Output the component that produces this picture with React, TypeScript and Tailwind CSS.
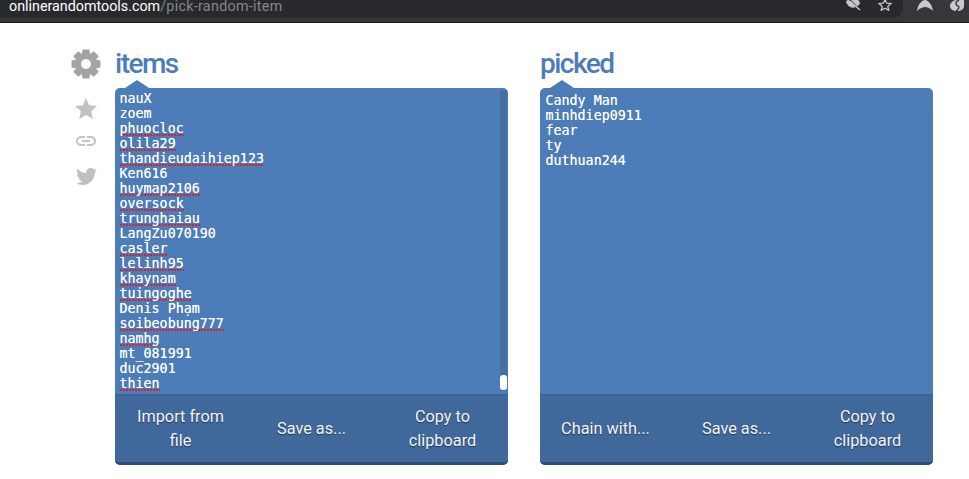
import { FaTwitter } from "react-icons/fa";
import { MdLink } from "react-icons/md";

const items: [string, boolean][] = [
  ["nauX", false], ["zoem", false], ["phuocloc", true], ["olila29", true], ["thandieudaihiep123", true],
  ["Ken616", false], ["huymap2106", true], ["oversock", true], ["trunghaiau", true], ["LangZu070190", false],
  ["casler", true], ["lelinh95", true], ["khaynam", true], ["tuingoghe", true], ["Denis Phạm", false],
  ["soibeobung777", true], ["namhg", true], ["mt_081991", false], ["duc2901", false], ["thien", true],
];
const picked = ["Candy Man", "minhdiep0911", "fear", "ty", "duthuan244"];

function Btn({ children }: { children: React.ReactNode }) {
  return (
    <div className="flex-1 text-center text-[#f2f5f9] text-[16.3px] leading-[24px] [text-shadow:0_1px_1px_rgba(0,0,0,0.5)]">
      {children}
    </div>
  );
}

function Panel({ title, children, buttons, pad }: { title: string; children: React.ReactNode; buttons: React.ReactNode; pad: string }) {
  return (
    <div className="w-[393px] flex flex-col">
      <div className="h-[65px] pt-[21px] text-[28px] leading-[40px] font-medium tracking-[-1.5px] text-[#4d7db8]">{title}</div>
      <div className="relative h-[377px] flex flex-col rounded-[5px] bg-[#4d7db8] overflow-visible">
        <div className="absolute left-[10px] -top-[8px] w-0 h-0 border-l-[12px] border-r-[12px] border-b-[8px] border-l-transparent border-r-transparent border-b-[#4d7db8]" />
        <div className={`relative h-[306px] ${pad} font-['DejaVu_Sans_Mono','Liberation_Mono',monospace] text-[13.33px] leading-[15px] text-white [text-shadow:0_0_0.6px_rgba(255,255,255,0.8)]`}>
          {children}
        </div>
        <div className="h-[71px] flex items-center bg-[#41689b] border-t border-t-[#3b5f8e] border-b-[3px] border-b-[#2f4b72] rounded-b-[5px]">
          {buttons}
        </div>
      </div>
    </div>
  );
}

function Gear() {
  return (
    <svg className="w-[30px] h-[30px]" viewBox="0 0 30 30" fill="#a3a3a3">
      {[0, 45, 90, 135, 180, 225, 270, 315].map((a) => (
        <path key={a} d="M11.6 0.5 H18.4 L19.4 7 H10.6 Z" transform={`rotate(${a} 15 15)`} />
      ))}
      <path fillRule="evenodd" d="M15 4.5 a10.5 10.5 0 1 0 0.01 0 Z M15 10 a5 5 0 1 1 -0.01 0 Z" />
    </svg>
  );
}

export default function App() {
  return (
    <div className="w-[969px] h-[479px] bg-white overflow-hidden font-['Roboto',sans-serif]">
      <div className="h-[23px] bg-[#36373b] border-b border-b-[#17181a] flex">
        <div className="w-[903px] h-[18px] bg-[#28292d] rounded-br-[10px] pl-[9px] relative">
          <div className="text-[14.3px] leading-[12px] text-white whitespace-nowrap">
            onlinerandomtools.com<span className="text-[#85868a] tracking-[0.3px]">/pick-random-item</span>
          </div>
          <svg className="absolute left-[846px] top-0" width="16" height="12" viewBox="0 0 16 12" fill="none" stroke="#c4c5c8" strokeWidth="2">
            <path d="M1 2 C5 -2 11 -2 13 3 C11 7 6 8 3 5 Z" fill="#c4c5c8" />
            <path d="M3 -1 L14 10" stroke="#28292d" strokeWidth="1.5" />
            <path d="M4 1 L14 10" stroke="#c4c5c8" strokeWidth="1.5" />
          </svg>
          <svg className="absolute left-[878px] -top-[1px]" width="14" height="12" viewBox="0 0 14 12" fill="none" stroke="#c4c5c8" strokeWidth="1.3">
            <path d="M7 0.5 L8.7 4.2 L13 4.6 L9.8 7.4 L10.8 11.3 L7 9.2 L3.2 11.3 L4.2 7.4 L1 4.6 L5.3 4.2 Z" />
          </svg>
        </div>
        <div className="flex-1 relative">
          <svg className="absolute left-[14px] top-0" width="16" height="11" viewBox="0 0 16 11" fill="#c9cacc">
            <path d="M8 0 C11 0 15 4 16 11 C13 8 10 7 8 7 C6 7 3 8 0 11 C1 4 5 0 8 0 Z" />
          </svg>
          <svg className="absolute left-[47px] top-0" width="14" height="11" viewBox="0 0 14 11" fill="#c9cacc">
            <path d="M7 0 L14 0 L14 6 C14 9 11 11 7 11 C3 11 0 9 0 6 C0 3 3 0 7 0 Z" />
            <path d="M9 0 C5 2 5 5 8 6 C10 7 8 10 6 11" stroke="#36373b" strokeWidth="1.4" fill="none" />
          </svg>
        </div>
      </div>
      <div className="flex pl-[71px]">
        <div className="w-[44px] flex flex-col items-start pt-[26px]">
          <Gear />
          <svg className="w-[22px] h-[21px] mt-[19px] ml-[4px]" viewBox="0 0 22 21" fill="#c2c2c2">
            <path d="M11 0 L14.2 7.2 L22 8 L16.2 13.2 L17.8 21 L11 17 L4.2 21 L5.8 13.2 L0 8 L7.8 7.2 Z" />
          </svg>
          <MdLink className="text-[#c4c4c4] w-[24px] h-[24px] mt-[10px] ml-[3px]" />
          <FaTwitter className="text-[#c0c0c0] w-[21px] h-[21px] mt-[13px] ml-[5px]" />
        </div>
        <div className="flex gap-[32px]">
          <Panel
            title="items"
            pad="pl-[4.5px] pt-[3px]"
            buttons={
              <>
                <Btn>Import from<br />file</Btn>
                <Btn>Save as...</Btn>
                <Btn>Copy to<br />clipboard</Btn>
              </>
            }
          >
            {items.map(([t, bad]) => (
              <div key={t} className="h-[15px]">
                <span className={bad ? "inline-block h-[15px] bg-[repeating-linear-gradient(90deg,#d8232f_0_2px,transparent_2px_3px)] bg-no-repeat bg-bottom bg-[length:100%_2px]" : ""}>{t}</span>
              </div>
            ))}
            <div className="absolute right-[1px] top-[2px] w-[7px] h-[301px] rounded-[3px] bg-[#45709f]">
              <div className="absolute bottom-[1px] left-0 w-[7px] h-[15px] rounded-[3px] bg-white" />
            </div>
          </Panel>
          <Panel
            title="picked"
            pad="pl-[5.5px] pt-[5px]"
            buttons={
              <>
                <Btn>Chain with...</Btn>
                <Btn>Save as...</Btn>
                <Btn>Copy to<br />clipboard</Btn>
              </>
            }
          >
            {picked.map((t) => (
              <div key={t}>{t}</div>
            ))}
          </Panel>
        </div>
      </div>
    </div>
  );
}
